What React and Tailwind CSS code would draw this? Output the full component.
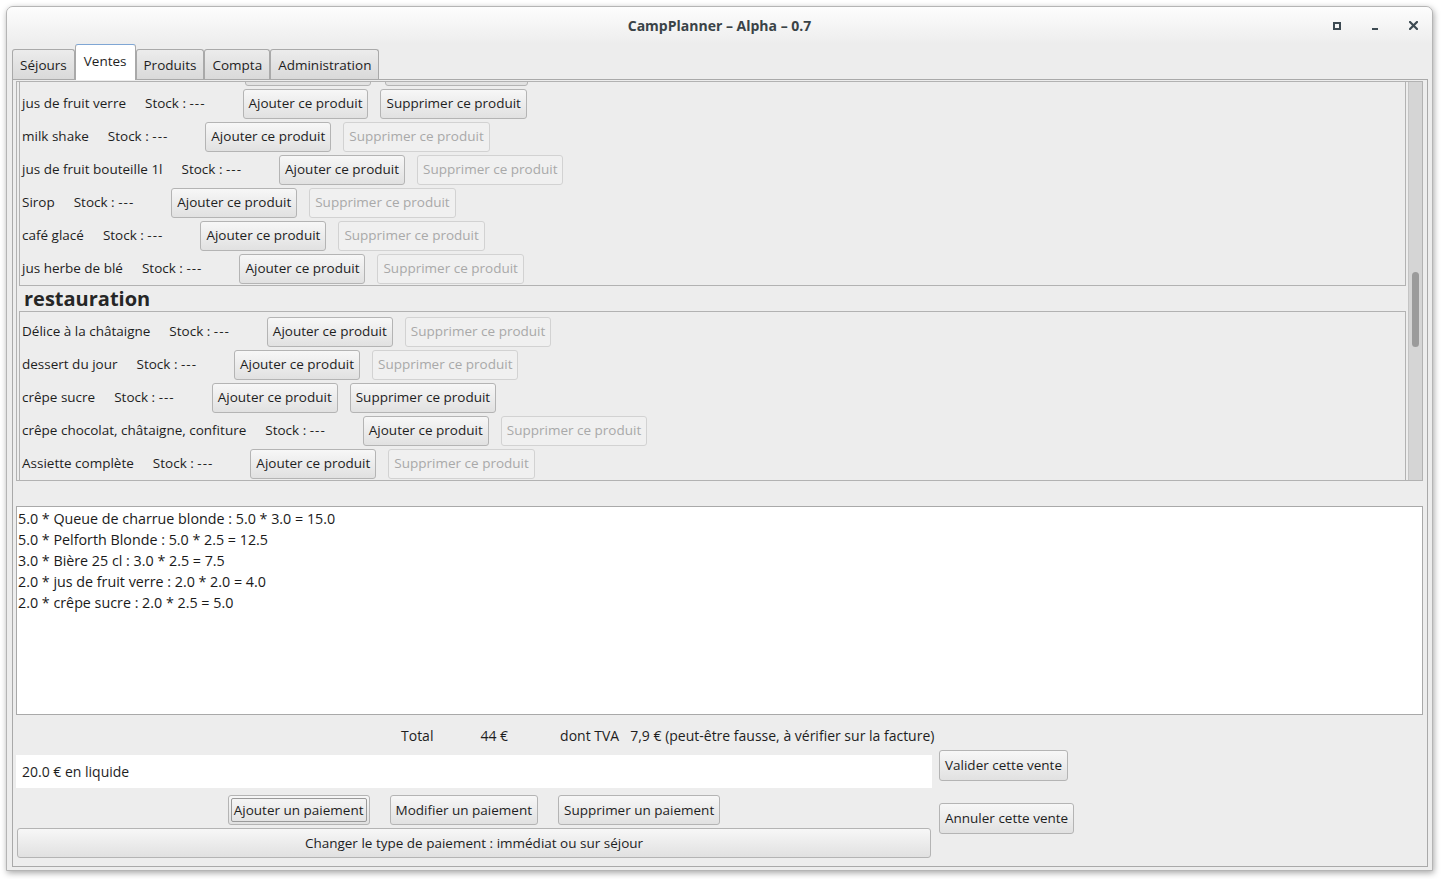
import React from 'react';

const btn = 'h-[30px] flex items-center rounded-[3px] border whitespace-nowrap text-[13.5px]';
const btnOn = `${btn} px-[5px] border-[#b4b4b4] bg-gradient-to-b from-[#f7f7f7] to-[#e1e1e1] text-[#1e1e1e]`;
const btnOff = `${btn} px-[5px] border-[#d2d2d2] bg-[#f0f0f0] text-[#a9a9a9]`;
const btnFocus = `${btn} p-[2px] border-[#b4b4b4] bg-gradient-to-b from-[#f7f7f7] to-[#e1e1e1] text-[#1e1e1e]`;

const Row = ({ name, canDelete }) => (
    <div className="h-[33px] flex items-center pl-[2px] text-[13.5px]">
        <span>{name}</span>
        <span className="ml-[19px]">Stock : <span className="tracking-[1px]">---</span></span>
        <button className={`${btnOn} ml-[37px]`}>Ajouter ce produit</button>
        <button className={`${canDelete ? btnOn : btnOff} ml-3`}>Supprimer ce produit</button>
    </div>
);

// rangée coupée par le défilement : on ne voit que le bas des boutons
const ClippedRow = () => (
    <div className="h-[33px] flex items-center pl-[2px]">
        <button className={`${btnOn} ml-[223px] w-[126px]`} aria-hidden="true" />
        <button className={`${btnOn} ml-[14px] w-[143px]`} aria-hidden="true" />
    </div>
);

const boissons = [
    { name: 'jus de fruit verre', canDelete: true },
    { name: 'milk shake', canDelete: false },
    { name: 'jus de fruit bouteille 1l', canDelete: false },
    { name: 'Sirop', canDelete: false },
    { name: 'café glacé', canDelete: false },
    { name: 'jus herbe de blé', canDelete: false },
];

const restauration = [
    { name: 'Délice à la châtaigne', canDelete: false },
    { name: 'dessert du jour', canDelete: false },
    { name: 'crêpe sucre', canDelete: true },
    { name: 'crêpe chocolat, châtaigne, confiture', canDelete: false },
    { name: 'Assiette complète', canDelete: false },
];

const lignes = [
    '5.0 * Queue de charrue blonde : 5.0 * 3.0 = 15.0',
    '5.0 * Pelforth Blonde : 5.0 * 2.5 = 12.5',
    '3.0 * Bière 25 cl : 3.0 * 2.5 = 7.5',
    '2.0 * jus de fruit verre : 2.0 * 2.0 = 4.0',
    '2.0 * crêpe sucre : 2.0 * 2.5 = 5.0',
];

const tabs = ['Séjours', 'Ventes', 'Produits', 'Compta', 'Administration'];

export default function App() {
    return (
        <div className="w-[1442px] h-[879px] bg-white pt-[6px] pl-[6px] overflow-hidden font-['Open_Sans','Noto_Sans',sans-serif] text-[14px] text-[#1e1e1e]">
            <div className="w-[1427px] h-[865px] rounded-t-[7px] border border-[#b5b5b5] bg-[#ededed] shadow-[1px_2px_6px_rgba(0,0,0,0.35)] flex flex-col overflow-hidden">
                {/* Title bar */}
                <div className="h-[37px] shrink-0 bg-gradient-to-b from-[#fdfdfd] to-[#ededed] grid grid-cols-[1fr_auto_1fr] items-center">
                    <div />
                    <div className="font-bold text-[#3a4347] text-[14px]">CampPlanner – Alpha – 0.7</div>
                    <div className="flex justify-end items-center">
                        <div className="w-[38px] flex justify-center">
                            <div className="w-[8px] h-[8px] border-2 border-[#3d4a52]" />
                        </div>
                        <div className="w-[38px] flex justify-center pt-[6px]">
                            <div className="w-[6px] h-[2px] bg-[#3d4a52]" />
                        </div>
                        <div className="w-[38px] flex justify-center">
                            <svg width="9" height="9" viewBox="0 0 9 9">
                                <path d="M1 1 L8 8 M8 1 L1 8" stroke="#3d4a52" strokeWidth="2.2" strokeLinecap="square" />
                            </svg>
                        </div>
                    </div>
                </div>

                {/* Tabs */}
                <div className="h-[35px] shrink-0 flex items-end pl-[5px] text-[13.5px]">
                    {tabs.map((t) => t === 'Ventes' ? (
                        <div key={t} className="h-[36px] px-[8px] flex items-center bg-white border-x border-t border-[#a9a9a9] border-t-[#7fa6d4] rounded-t-[3px] -mb-px relative z-10 pb-[2px]">{t}</div>
                    ) : (
                        <div key={t} className="h-[31px] px-[7px] flex items-center bg-gradient-to-b from-[#ececec] to-[#d9d9d9] border-x border-t border-[#a9a9a9] rounded-t-[3px] -mb-px">{t}</div>
                    ))}
                </div>

                {/* Tab panel */}
                <div className="ml-[5px] mr-[4px] mb-[3px] flex-1 border border-[#a9a9a9] pt-[1px] pl-[3px] pr-[4px] flex flex-col">
                    {/* Scroll pane */}
                    <div className="h-[400px] shrink-0 border border-[#b2b2b2] flex overflow-hidden">
                        <div className="flex-1 overflow-hidden pl-[2px] pr-[2px]">
                            <div className="-mt-[32px]">
                                <div className="border border-[#b2b2b2] pt-[3px]">
                                    <ClippedRow />
                                    {boissons.map((p) => <Row key={p.name} {...p} />)}
                                </div>
                                <div className="h-[25px] flex items-center pl-[5px] font-bold text-[20px] text-[#262626]">restauration</div>
                                <div className="border border-[#b2b2b2] pt-[3px]">
                                    {restauration.map((p) => <Row key={p.name} {...p} />)}
                                </div>
                            </div>
                        </div>
                        <div className="w-[14px] shrink-0 bg-[#d5d5d5] border-l border-[#c4c4c4] pt-[190px] flex justify-center">
                            <div className="w-[7px] h-[75px] rounded-full bg-[#9b9b9b]" />
                        </div>
                    </div>

                    {/* Récapitulatif */}
                    <div className="mt-[25px] h-[209px] shrink-0 bg-white border border-[#a9a9a9] pl-[1px] pt-[1px] leading-[21px] text-[14.3px] text-[#1a1a1a]">
                        {lignes.map((l) => <div key={l}>{l}</div>)}
                    </div>

                    {/* Bas */}
                    <div className="flex">
                        <div className="w-[916px] flex flex-col">
                            <div className="h-[40px] flex items-center pl-[385px] whitespace-nowrap">
                                <span>Total</span>
                                <span className="ml-[47px]">44 €</span>
                                <span className="ml-[52px]">dont TVA</span>
                                <span className="ml-[11px]">7,9 € (peut-être fausse, à vérifier sur la facture)</span>
                            </div>
                            <div className="h-[33px] bg-white flex items-center pl-[6px]">20.0 € en liquide</div>
                            <div className="mt-[7px] flex justify-center gap-[20px]">
                                <button className={btnFocus}>
                                    <span className="h-full flex items-center px-[2px] border border-[#9a9a9a] rounded-[2px]">Ajouter un paiement</span>
                                </button>
                                <button className={btnOn}>Modifier un paiement</button>
                                <button className={btnOn}>Supprimer un paiement</button>
                            </div>
                            <button className={`${btnOn} mt-[3px] mx-[1px] h-[29px] justify-center`}>Changer le type de paiement : immédiat ou sur séjour</button>
                        </div>
                        <div className="ml-[7px] pt-[35px] flex flex-col items-start gap-[22px]">
                            <button className={`${btnOn} h-[31px]`}>Valider cette vente</button>
                            <button className={`${btnOn} h-[31px]`}>Annuler cette vente</button>
                        </div>
                    </div>
                </div>
            </div>
        </div>
    );
}
